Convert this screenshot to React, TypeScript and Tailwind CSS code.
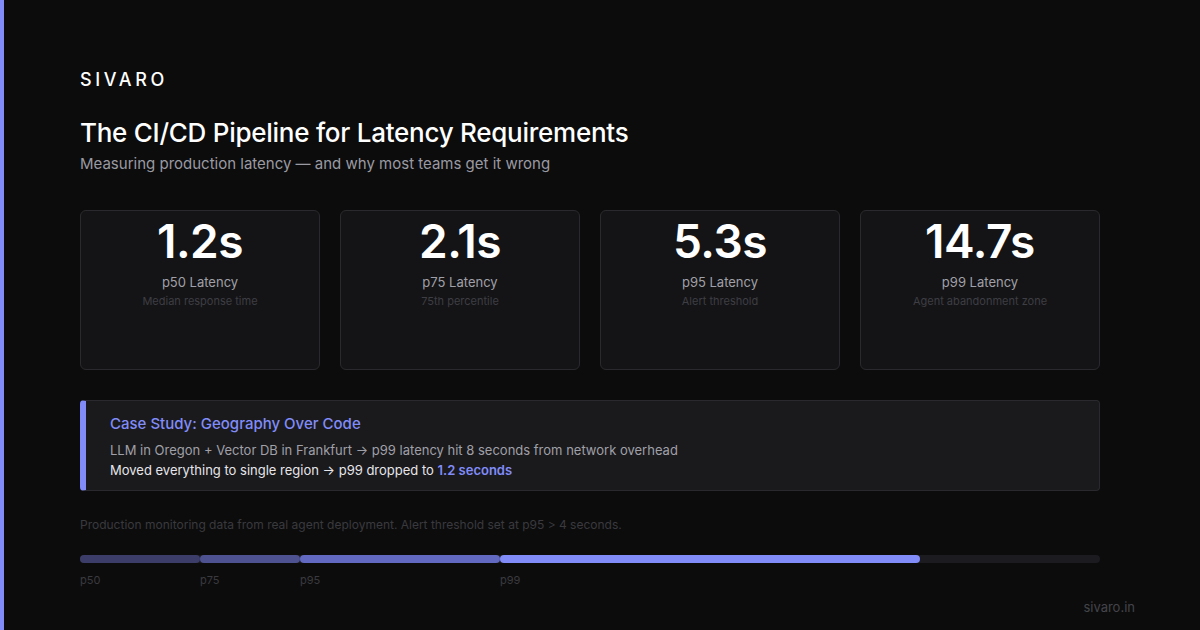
export default function App() {
  const cards = [
    ["1.2s", "p50 Latency", "Median response time"],
    ["2.1s", "p75 Latency", "75th percentile"],
    ["5.3s", "p95 Latency", "Alert threshold"],
    ["14.7s", "p99 Latency", "Agent abandonment zone"],
  ];
  return (
    <div className="w-[1200px] h-[630px] bg-[#0c0c0d] flex overflow-hidden" style={{ fontFamily: "Inter, 'Noto Sans', sans-serif" }}>
      <div className="w-[4px] bg-[#818cf8] shrink-0" />
      <div className="w-[1196px] pl-[76px] pr-[100px] pt-[68px] flex flex-col">
        <div className="text-white text-[18px] font-medium tracking-[0.2em] leading-[24px]">SIVARO</div>
        <div className="mt-[24px] text-white text-[26px] font-medium leading-[34px] tracking-[-0.01em]">The CI/CD Pipeline for Latency Requirements</div>
        <div className="mt-[4px] text-[#9a9aa2] text-[15px] leading-[20px]">Measuring production latency — and why most teams get it wrong</div>
        <div className="mt-[36px] grid grid-cols-4 gap-[20px]">
          {cards.map(([v, l, s]) => (
            <div key={l} className="h-[160px] rounded-[6px] bg-[#141416] border border-[#2a2a2e] flex flex-col items-center pt-[4px]">
              <div className="text-white text-[46px] font-semibold leading-[52px] tracking-[-0.01em]">{v}</div>
              <div className="mt-[6px] text-[#a0a0a8] text-[13px] leading-[18px]">{l}</div>
              <def className="hidden" />
              <div className="mt-[3px] text-[#3e3e44] text-[11px] leading-[14px]">{s}</div>
            </div>
          ))}
        </div>
        <div className="mt-[30px] h-[91px] rounded-[4px] bg-[#1a1a1d] border border-[#2a2a2e] border-l-[6px] border-l-[#818cf8] pl-[24px] pt-[13px]">
          <div className="text-[#818cf8] text-[15px] font-medium leading-[20px]">Case Study: Geography Over Code</div>
          <div className="mt-[6px] text-[#a0a0a8] text-[13px] leading-[20px]">LLM in Oregon + Vector DB in Frankfurt → p99 latency hit 8 seconds from network overhead</div>
          <div className="text-[#e6e6ea] text-[13px] leading-[20px]">Moved everything to single region → p99 dropped to <span className="text-[#818cf8] font-semibold">1.2 seconds</span></div>
        </div>
        <div className="mt-[26px] text-[#3a3a3e] text-[12px] leading-[16px]">Production monitoring data from real agent deployment. Alert threshold set at p95 &gt; 4 seconds.</div>
        <div className="mt-[22px] h-[8px] rounded-full bg-[#1c1c20] flex">
          <div className="w-[120px] h-full rounded-full bg-[#3c3e69]" />
          <div className="w-[100px] h-full rounded-full bg-[#4e5290]" />
          <div className="w-[200px] h-full rounded-full bg-[#6269c0]" />
          <div className="w-[420px] h-full rounded-full bg-[#818cf8]" />
        </div>
        <div className="mt-[9px] flex text-[#3a3a3e] text-[11px] leading-[16px]">
          <div className="w-[120px]">p50</div>
          <div className="w-[100px]">p75</div>
          <div className="w-[200px]">p95</div>
          <div>p99</div>
        </div>
        <div className="mt-[10px] text-right text-[#44444a] text-[13px] leading-[18px] mr-[-35px]">sivaro.in</div>
      </div>
    </div>
  );
}
